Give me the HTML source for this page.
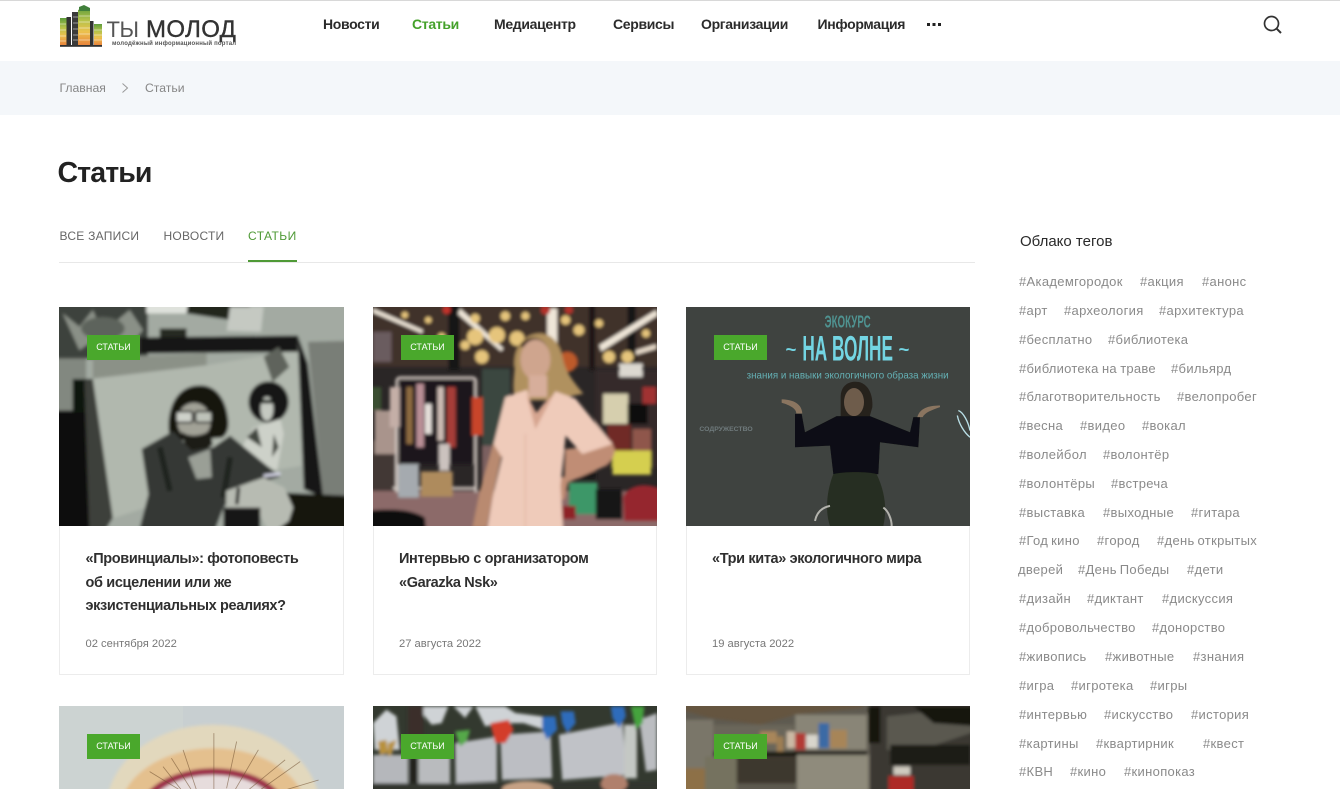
<!DOCTYPE html>
<html lang="ru"><head><meta charset="utf-8"><title>Статьи</title>
<style>
html,body{margin:0;padding:0;background:#fff;width:1340px;height:789px;overflow:hidden}
#p{position:absolute;left:0;top:0;width:1340px;height:789px;overflow:hidden;font-family:"Liberation Sans","Noto Sans CJK SC",sans-serif;color:#222}
.a{position:absolute;white-space:nowrap}
.n{top:16px;font-size:14px;line-height:16px;font-weight:700;color:#2b2b2b;letter-spacing:-.32px}
.t{font-size:13px;line-height:16px;color:#8a8a8a;letter-spacing:.32px;word-spacing:-1px;margin-top:1px}
.card{position:absolute;top:526px;height:149px;box-sizing:border-box;border:1px solid #ececec;border-top:0;background:#fff}
.h{font-size:14.5px;line-height:23.5px;font-weight:700;color:#2f2f2f;letter-spacing:-.36px;margin-top:1px}
.d{font-size:11.2px;line-height:14px;color:#777;margin-top:1px}
.b{position:absolute;width:53px;height:25px;background:#4aa82c;color:#fff;font-size:9px;line-height:25px;text-align:center}
.tab{top:228px;font-size:12px;line-height:16px;letter-spacing:.25px;color:#666}
svg{position:absolute;display:block;overflow:hidden}
</style></head><body><div id="p">
<div class="a" style="left:0;top:0;width:1340px;height:1px;background:#d8d8d8"></div>

<svg style="left:58px;top:4px" width="46" height="44" viewBox="0 0 46 44">
<defs>
<linearGradient id="lg" x1="0" y1="0" x2="0" y2="1"><stop offset="0" stop-color="#5d9c3c"/><stop offset=".35" stop-color="#b5c24a"/><stop offset=".65" stop-color="#ecc14e"/><stop offset="1" stop-color="#e8853c"/></linearGradient>
<filter id="f0"><feGaussianBlur stdDeviation=".35"/></filter>
<filter id="f1" x="-5%" y="-5%" width="110%" height="110%"><feGaussianBlur stdDeviation="5"/></filter>
</defs>
<g filter="url(#f0)">
<rect x="2" y="14" width="6.500" height="27" fill="url(#lg)"/>
<rect x="8.500" y="13" width="4.500" height="28" fill="#333"/>
<rect x="14" y="8" width="6.500" height="33" fill="#3a3a3a"/>
<path d="M20 41V6l6-3 6 3v35z" fill="url(#lg)"/>
<path d="M21 3l5-2 6 3v3h-11z" fill="#3f7f3a"/>
<rect x="32" y="17" width="3.500" height="24" fill="#333"/>
<rect x="36" y="20" width="8" height="21" fill="url(#lg)"/>
<path d="M2 20h6M2 26h6M2 32h6M2 37h6M21 12h11M21 18h11M21 24h11M21 30h11M21 36h11M36 26h8M36 31h8M36 36h8" stroke="#fff" stroke-opacity=".45" stroke-width=".9"/>
<path d="M15 13h5M15 19h5M15 25h5M15 31h5M15 36h5" stroke="#888" stroke-width="1.300"/>
<rect x="2" y="41" width="42" height="1.800" fill="#333"/>
</g></svg>
<div class="a" style="left:106.500px;top:19px;font-size:22px;line-height:22px;color:#555;letter-spacing:-.4px">ТЫ</div>
<div class="a" style="left:146px;top:18px;font-size:24px;line-height:23px;color:#333;letter-spacing:.35px;-webkit-text-stroke:.4px #333">МОЛОД</div>
<div class="a" style="left:112px;top:40px;font-size:6px;line-height:8px;font-weight:700;color:#555;letter-spacing:.2px">молодёжный информационный портал</div>

<div class="a n" style="left:323px">Новости</div>
<div class="a n" style="left:412px;color:#44a12a">Статьи</div>
<div class="a n" style="left:494px">Медиацентр</div>
<div class="a n" style="left:613px">Сервисы</div>
<div class="a n" style="left:701px">Организации</div>
<div class="a n" style="left:817.500px">Информация</div>
<svg style="left:926px;top:22px" width="17" height="5"><rect x="1" y="1" width="3" height="3" fill="#222"/><rect x="6.500" y="1" width="3" height="3" fill="#222"/><rect x="12" y="1" width="3" height="3" fill="#222"/></svg>
<svg style="left:1262px;top:14px" width="21" height="21" viewBox="0 0 21 21" fill="none" stroke="#333"><circle cx="9.500" cy="9.500" r="7" stroke-width="1.700"/><path d="M14.800 14.800l4.200 4.200" stroke-width="2"/></svg>

<div class="a" style="left:0;top:61px;width:1340px;height:54px;background:#f4f7fa"></div>
<div class="a" style="left:59.500px;top:80px;font-size:12.200px;line-height:16px;color:#868686">Главная</div>
<svg style="left:120px;top:82px" width="10" height="12" fill="none" stroke="#999"><path d="M2.500 1.500l5 4.500-5 4.500"/></svg>
<div class="a" style="left:145px;top:80px;font-size:12.200px;line-height:16px;color:#868686">Статьи</div>

<div class="a" style="left:57.500px;top:155px;font-size:28.500px;line-height:36px;font-weight:700;color:#222;letter-spacing:-.9px">Статьи</div>
<div class="a tab" style="left:59.500px">ВСЕ ЗАПИСИ</div>
<div class="a tab" style="left:163.500px">НОВОСТИ</div>
<div class="a tab" style="left:248px;color:#4f9a36;letter-spacing:.42px">СТАТЬИ</div>
<div class="a" style="left:59px;top:262px;width:916px;height:1px;background:#e8e8e8"></div>
<div class="a" style="left:248px;top:260px;width:49px;height:2px;background:#4f9a36"></div>

<!-- image 1 -->
<svg style="left:59px;top:307px" width="285" height="219" viewBox="29 21 851 654" preserveAspectRatio="none">
<g filter="url(#f1)">
<rect x="0" y="0" width="900" height="700" fill="#a3aaa2"/>
<rect x="0" y="0" width="294" height="176" fill="#3e433d"/>
<path d="M40 40l50 40 40-50 30 70-70 50zM180 80l60-50 40 60-50 60z" fill="#8a9087"/>
<ellipse cx="160" cy="85" rx="65" ry="34" fill="#5d645c"/>
<rect x="0" y="175" width="110" height="160" fill="#828880"/>
<rect x="0" y="330" width="135" height="380" fill="#0b0e0b"/>
<rect x="70" y="236" width="62" height="100" fill="#101310"/>
<polygon points="105,240 135,238 190,650 160,700 120,700" fill="#3c413b"/>
<rect x="290" y="0" width="200" height="40" fill="#dfe2dc"/>
<polygon points="415,0 600,0 595,68 410,40" fill="#22251f"/>
<polygon points="540,20 640,20 632,95 530,92" fill="#c5c9c2"/>
<rect x="330" y="85" width="80" height="30" fill="#262924"/>
<polygon points="130,235 470,195 740,150 755,495 600,520 190,652" fill="#b1b8ae"/>
<polygon points="130,170 340,165 470,160 470,195 130,235" fill="#8b9187"/>
<polygon points="270,112 742,106 742,155 270,160" fill="#141713"/>
<polygon points="742,106 772,190 818,590 760,565" fill="#131512"/>
<polygon points="772,125 900,122 900,585 818,590" fill="#797e77"/>
<polygon points="690,575 900,585 900,700 680,700" fill="#121411"/>
<ellipse cx="655" cy="305" rx="60" ry="62" fill="#171916"/>
<ellipse cx="650" cy="325" rx="19" ry="36" fill="#c5c9c1"/>
<rect x="630" y="298" width="42" height="11" fill="#101210"/>
<polygon points="610,380 690,355 700,400 680,510 600,470 575,440" fill="#cdd1c9"/>
<path d="M590 410l30-30 15 60zM670 400l15 40-20 30z" fill="#42463f"/>
<path d="M640 170l45-30 32 60-50 45z" fill="#5f635c"/>
<path d="M450 255c-60 0-92 50-94 118-1 30 10 52 28 47l125-8c15 0 30-22 25-57-6-55-33-100-84-100z" fill="#181511"/>
<ellipse cx="432" cy="362" rx="50" ry="55" fill="#a2a297"/>
<path d="M395 392c15 18 65 18 85-5l8 45-40 32-42-24z" fill="#1d1a16"/>
<rect x="378" y="333" width="50" height="33" rx="6" fill="#cfd2ca" stroke="#141412" stroke-width="6"/>
<rect x="436" y="333" width="50" height="33" rx="6" fill="#bfc3ba" stroke="#141412" stroke-width="6"/>
<polygon points="276,445 370,392 425,450 490,440 540,405 690,528 565,565 520,620 490,700 265,700 296,580" fill="#353935"/>
<polygon points="415,470 480,445 485,530 440,535" fill="#9a9f96"/>
<path d="M330 440l30 130M540 470l-20 120" stroke="#1d201c" stroke-width="16" fill="none"/>
<polygon points="528,570 640,530 702,560 728,620 715,660 660,700 620,625 528,625" fill="#b7bbb2"/>
<path d="M640 525l50-6" stroke="#dde" stroke-width="8"/>
<path d="M565 560l-5 50" stroke="#0c0c0c" stroke-width="10"/>
<rect x="520" y="620" width="110" height="80" fill="#171916"/>
</g></svg>
<div class="b" style="left:87px;top:335px">СТАТЬИ</div>
<div class="card" style="left:59px;width:285px"></div>
<div class="a h" style="left:85.500px;top:547px">«Провинциалы»: фотоповесть<br>об исцелении или же<br>экзистенциальных реалиях?</div>
<div class="a d" style="left:85.500px;top:636px">02 сентября 2022</div>

<!-- image 2 -->
<svg style="left:373px;top:307px" width="284" height="219" viewBox="25 21 848 654" preserveAspectRatio="none">
<rect width="900" height="700" fill="#2a2626"/>
<g filter="url(#f1)">
<rect x="0" y="0" width="900" height="200" fill="#40302c"/>
<rect x="250" y="0" width="34" height="210" fill="#161515"/><rect x="785" y="0" width="24" height="190" fill="#131212"/><rect x="670" y="0" width="18" height="210" fill="#1a1919"/>
<path d="M25 25l150 65-4 10L25 38zM285 25l130 120-8 8L278 42zM545 25h30v110h-30zM700 135l170-105 5 16-168 108z" fill="#efe6d8"/>
<path d="M810 150l60-18v14l-60 18z" fill="#e9dccb"/>
<g fill="#e6c57c">
<circle cx="330" cy="110" r="24"/><circle cx="395" cy="105" r="24"/><circle cx="455" cy="115" r="22"/><circle cx="350" cy="170" r="20"/><circle cx="300" cy="135" r="14"/><circle cx="730" cy="170" r="18"/><circle cx="785" cy="170" r="18"/><circle cx="640" cy="90" r="16"/><circle cx="600" cy="60" r="14"/><circle cx="700" cy="70" r="12"/><circle cx="330" cy="55" r="14"/><circle cx="420" cy="48" r="14"/><circle cx="480" cy="48" r="12"/><circle cx="120" cy="45" r="10"/><circle cx="190" cy="60" r="10"/><circle cx="230" cy="110" r="12"/><circle cx="840" cy="100" r="12"/></g>
<circle cx="605" cy="185" r="30" fill="#bd5a2c"/><circle cx="245" cy="30" r="12" fill="#c4332a"/><circle cx="540" cy="30" r="14" fill="#b4332a"/><circle cx="610" cy="30" r="12" fill="#b4332a"/>
<rect x="25" y="95" width="55" height="90" fill="#6b5c5e"/>
<rect x="0" y="570" width="900" height="130" fill="#8c6a69"/>
<rect x="0" y="420" width="100" height="150" fill="#423836"/>
<rect x="30" y="330" width="70" height="130" fill="#a9948c"/>
<rect x="0" y="260" width="50" height="70" fill="#3a4f33"/>
<rect x="350" y="205" width="85" height="230" fill="#3a4740"/>
<rect x="350" y="435" width="35" height="140" fill="#7b6161"/>
<path d="M105 232h215q12 0 12 12v330M108 232q-12 0-12 12v330M85 562h250" fill="none" stroke="#d5cbc4" stroke-width="8"/>
<rect x="106" y="240" width="220" height="250" fill="#1e191a"/>
<rect x="125" y="260" width="18" height="170" fill="#8e6c42"/><rect x="155" y="250" width="22" height="190" fill="#b98f96"/><rect x="180" y="310" width="20" height="90" fill="#e5dfda"/><rect x="218" y="260" width="18" height="160" fill="#cfbeb6"/><rect x="246" y="260" width="26" height="180" fill="#a63e38"/><rect x="320" y="290" width="32" height="115" fill="#c9452a"/><rect x="75" y="260" width="30" height="120" fill="#c4afa7"/>
<rect x="100" y="490" width="62" height="100" fill="#a5aaaf"/><rect x="168" y="512" width="95" height="75" fill="#ae8b5d"/><rect x="222" y="430" width="32" height="80" fill="#cbc2be"/>
<path d="M0 630c80-8 140-6 180 20l5 50H0z" fill="#0e0e0e"/>
<rect x="690" y="210" width="210" height="290" fill="#35292b"/>
<rect x="712" y="280" width="75" height="90" fill="#d6cfae"/><rect x="785" y="310" width="60" height="60" fill="#111"/><rect x="725" y="372" width="70" height="80" fill="#6f2a26"/><rect x="800" y="385" width="55" height="85" fill="#8f574c"/><rect x="740" y="450" width="115" height="72" fill="#d5cf4f"/>
<rect x="760" y="190" width="70" height="40" fill="#dcd8d0"/><rect x="830" y="260" width="40" height="50" fill="#a03030"/>
<rect x="610" y="545" width="85" height="95" fill="#3d9768"/><rect x="690" y="565" width="80" height="90" fill="#171719"/><path d="M772 590c15-45 85-45 120-20v90H775z" fill="#95272d"/><rect x="590" y="615" width="40" height="40" fill="#8e2028"/>
<rect x="595" y="445" width="95" height="90" fill="#161618"/>
<path d="M448 200c-5-60 30-100 75-100 40 0 62 35 70 80 8 40 40 75 60 100l-100 20H450c-10-35-5-60-2-100z" fill="#b0915f"/>
<path d="M462 140c15-35 70-38 85 5-25-8-55-6-85-5z" fill="#3c2b20"/>
<ellipse cx="510" cy="178" rx="45" ry="60" fill="#cfa58e"/>
<rect x="490" y="225" width="55" height="65" fill="#d7ae9b"/>
<path d="M384 430l30 10-35 160-15 80h-42l22-110z" fill="#b98a70"/>
<path d="M600 445l55-5 80-20 12 25c0 30-20 50-60 65l-80 35-10 50-50 8-20-45 30-25 40-5z" fill="#c08d74"/>
<path d="M420 290l65-22 25 95 60-90 60 22 110 135-90 30-50-55-15 150 10 170H360l22-135 28-120-25-40z" fill="#efcbba"/>
<path d="M482 278l28 108 55-105-30 28-22 28z" fill="#d6a590"/>
<path d="M480 400v300" stroke="#dcb1a1" stroke-width="3"/>
</g></svg>
<div class="b" style="left:401px;top:335px">СТАТЬИ</div>
<div class="card" style="left:373px;width:284px"></div>
<div class="a h" style="left:399px;top:547px">Интервью с организатором<br>«Garazka Nsk»</div>
<div class="a d" style="left:399px;top:636px">27 августа 2022</div>

<!-- image 3 -->
<svg style="left:686px;top:307px" width="284" height="219" viewBox="18 21 852 654" preserveAspectRatio="none">
<rect x="0" y="0" width="900" height="700" fill="#3f4340"/>
<text x="503" y="82" font-size="52" text-anchor="middle" fill="#4f9391" font-family="Liberation Sans" font-weight="700" textLength="138" lengthAdjust="spacingAndGlyphs">ЭКОКУРС</text>
<text x="503" y="181" font-size="104" text-anchor="middle" fill="#73d5e3" font-family="Liberation Sans" font-weight="700" textLength="272" lengthAdjust="spacingAndGlyphs">НА ВОЛНЕ</text>
<text x="333" y="166" font-size="56" text-anchor="middle" fill="#73d5e3" font-family="Liberation Sans" font-weight="700">~</text>
<text x="672" y="166" font-size="56" text-anchor="middle" fill="#73d5e3" font-family="Liberation Sans" font-weight="700">~</text>
<text x="503" y="235" font-size="30" text-anchor="middle" fill="#64b0b4" font-family="Liberation Sans" textLength="606" lengthAdjust="spacingAndGlyphs">знания и навыки экологичного образа жизни</text>
<text x="138" y="391" font-size="18" text-anchor="middle" fill="#6f7a7c" font-family="Liberation Sans" font-weight="700" textLength="160" lengthAdjust="spacingAndGlyphs">СОДРУЖЕСТВО</text>
<g filter="url(#f0)">
<path d="M482 290c0-35 25-50 55-45 30 8 42 40 40 75l-10 35h-85z" fill="#26201c"/>
<ellipse cx="522" cy="305" rx="30" ry="42" fill="#6e5b4c"/>
<path d="M345 340h20l10 55 95-48h100l120 48 10-45h20l-5 90-115-15-5 95H460l-10-85-105 5z" fill="#0c0f12"/>
<path d="M305 297c25 0 60 8 62 42h-18c0-15-20-25-44-32zM780 315c-25 0-60 4-68 35h16c8-15 25-20 52-30z" fill="#8a7460"/>
<path d="M460 520c30-8 105-8 130 0 28 60 30 110 20 155H450c-14-40-12-100 10-155z" fill="#282e20"/>
<path d="M405 660c5-25 20-40 45-45M610 620c15 10 25 35 25 55" stroke="#b3b3ad" stroke-width="6" fill="none"/>
<path d="M835 330c15 5 30 35 35 60M832 345c5 25 20 50 38 65" stroke="#b9dfe6" stroke-width="4" fill="none"/>
</g></svg>
<div class="b" style="left:714px;top:335px">СТАТЬИ</div>
<div class="card" style="left:686px;width:284px"></div>
<div class="a h" style="left:712px;top:547px">«Три кита» экологичного мира</div>
<div class="a d" style="left:712px;top:636px">19 августа 2022</div>

<!-- row 2 -->
<svg style="left:59px;top:706px" width="285" height="83" viewBox="29 19 852 248" preserveAspectRatio="none">
<rect x="0" y="0" width="900" height="300" fill="#c8cfd1"/>
<rect x="0" y="0" width="400" height="300" fill="#ccd3d2"/>
<g filter="url(#f1)">
<ellipse cx="490" cy="330" rx="320" ry="255" fill="#e2d8bd"/>
<ellipse cx="490" cy="340" rx="280" ry="195" fill="#e4c08e"/>
<ellipse cx="490" cy="345" rx="225" ry="140" fill="#9c2d4a"/>
<ellipse cx="490" cy="350" rx="205" ry="125" fill="#e6dcdc"/>
</g>
<g stroke="#6b4a2c" stroke-width="2.500" fill="none" opacity=".55">
<path d="M492 100v170M400 150l40 120M365 175l60 95M300 215l90 55M560 125l-30 140M625 150l-70 120M705 180l-110 90M750 185l-120 85M805 240l-100 30M340 200l55 70"/>
</g></svg>
<svg style="left:373px;top:706px" width="284" height="83" viewBox="25 19 848 248" preserveAspectRatio="none">
<rect x="0" y="0" width="900" height="300" fill="#33392f"/>
<g filter="url(#f1)">
<path d="M25 70l40-40 30 20 10 100H30zM175 20h75l-20 50-30 5-25-30zM265 20h60l-25 35zM330 20h90l30 20 80 10 5 40-60-20-65 0-50 10z" fill="#cfd3d6"/>
<rect x="130" y="20" width="45" height="110" fill="#3a2f2a"/>
<rect x="25" y="165" width="105" height="90" fill="#b5b7bb"/>
<rect x="160" y="165" width="95" height="90" fill="#b9bbbe"/>
<polygon points="270,130 395,110 395,245 272,250" fill="#bdbfc4"/>
<polygon points="405,105 555,95 560,235 410,240" fill="#bcbec3"/>
<polygon points="580,105 770,68 782,225 590,240" fill="#c0c2c7"/>
<polygon points="820,60 873,40 873,210 840,215" fill="#bbbdc1"/>
<rect x="775" y="75" width="38" height="160" fill="#c4c8c4"/>
<rect x="135" y="175" width="22" height="85" fill="#22231f"/>
<rect x="0" y="250" width="900" height="30" fill="#32362e"/>
<path d="M375 70l55-10 15 30-25 40h-30z" fill="#d33e2c"/>
<path d="M530 50l40 0 5 40-30 30-15-30zM585 35l40 0 5 35-25 30-15-30zM735 20h40l5 30-20 35-20-30z" fill="#2e6cbb"/>
<path d="M795 20h40l-5 50-20 20z" fill="#45a33d"/>
<path d="M270 95l45-5-10 35-20 15z" fill="#55a84a"/>
<path d="M40 125l25-5 5 40-25 5zM70 130l25-10-15 45-10 5z" fill="#b8913e"/>
<ellipse cx="485" cy="268" rx="75" ry="25" fill="#c6a184"/>
<ellipse cx="745" cy="250" rx="40" ry="28" fill="#b0806c"/>
</g></svg>
<svg style="left:686px;top:706px" width="284" height="83" viewBox="18 19 851 248" preserveAspectRatio="none">
<rect x="0" y="0" width="900" height="300" fill="#5e5a50"/>
<g filter="url(#f1)">
<polygon points="0,0 570,0 540,25 345,45 240,75 90,55 0,30" fill="#655440"/>
<rect x="0" y="60" width="100" height="150" fill="#7a7669"/>
<rect x="100" y="75" width="240" height="80" fill="#6a665a"/>
<rect x="345" y="45" width="215" height="105" fill="#898577"/>
<rect x="240" y="95" width="50" height="35" fill="#a8865a"/><rect x="290" y="110" width="20" height="50" fill="#9e7e52"/>
<rect x="320" y="95" width="25" height="50" fill="#cbb9a4"/><rect x="345" y="100" width="32" height="50" fill="#b33a34"/><rect x="378" y="105" width="35" height="40" fill="#d8d5cc"/><rect x="415" y="70" width="32" height="75" fill="#3b6aa5"/><rect x="450" y="90" width="50" height="55" fill="#a78559"/>
<rect x="100" y="155" width="460" height="14" fill="#16140f"/>
<rect x="0" y="205" width="75" height="80" fill="#8d6f46"/>
<rect x="75" y="170" width="95" height="110" fill="#75725f"/>
<rect x="170" y="170" width="180" height="80" fill="#3d392f"/>
<rect x="350" y="165" width="215" height="110" fill="#8f8b7c"/>
<polygon points="570,0 900,0 900,300 570,300" fill="#3a3833"/>
<polygon points="620,50 900,20 900,90 720,150 620,150" fill="#5a5850"/>
<polygon points="700,20 900,20 900,80 760,70" fill="#161511"/>
<rect x="630" y="135" width="240" height="60" fill="#1d1c18"/>
<rect x="625" y="228" width="75" height="50" fill="#ad2a26"/>
<rect x="640" y="200" width="50" height="25" fill="#cfcac0"/>
<rect x="565" y="20" width="35" height="110" fill="#17150f"/>
</g></svg>
<div class="b" style="left:87px;top:734px">СТАТЬИ</div>
<div class="b" style="left:401px;top:734px">СТАТЬИ</div>
<div class="b" style="left:714px;top:734px">СТАТЬИ</div>

<!-- sidebar -->
<div class="a" style="left:1020px;top:233px;font-size:15px;line-height:18px;color:#2a2a2a">Облако тегов</div>
<div class="a t" style="left:1019px;top:273px">#Академгородок</div><div class="a t" style="left:1140px;top:273px">#акция</div><div class="a t" style="left:1202px;top:273px">#анонс</div>
<div class="a t" style="left:1019px;top:302px">#арт</div><div class="a t" style="left:1064px;top:302px">#археология</div><div class="a t" style="left:1159px;top:302px">#архитектура</div>
<div class="a t" style="left:1019px;top:331px">#бесплатно</div><div class="a t" style="left:1108px;top:331px">#библиотека</div>
<div class="a t" style="left:1019px;top:360px;letter-spacing:.25px;word-spacing:-.5px">#библиотека на траве</div><div class="a t" style="left:1171px;top:360px">#бильярд</div>
<div class="a t" style="left:1019px;top:388px">#благотворительность</div><div class="a t" style="left:1177px;top:388px">#велопробег</div>
<div class="a t" style="left:1019px;top:417px">#весна</div><div class="a t" style="left:1080px;top:417px">#видео</div><div class="a t" style="left:1142px;top:417px">#вокал</div>
<div class="a t" style="left:1019px;top:446px">#волейбол</div><div class="a t" style="left:1103px;top:446px">#волонтёр</div>
<div class="a t" style="left:1019px;top:475px">#волонтёры</div><div class="a t" style="left:1111px;top:475px">#встреча</div>
<div class="a t" style="left:1019px;top:504px">#выставка</div><div class="a t" style="left:1103px;top:504px">#выходные</div><div class="a t" style="left:1191px;top:504px">#гитара</div>
<div class="a t" style="left:1019px;top:532px">#Год кино</div><div class="a t" style="left:1097px;top:532px">#город</div><div class="a t" style="left:1157px;top:532px">#день открытых</div>
<div class="a t" style="left:1018px;top:561px">дверей</div><div class="a t" style="left:1078px;top:561px">#День Победы</div><div class="a t" style="left:1187px;top:561px">#дети</div>
<div class="a t" style="left:1019px;top:590px">#дизайн</div><div class="a t" style="left:1087px;top:590px">#диктант</div><div class="a t" style="left:1162px;top:590px">#дискуссия</div>
<div class="a t" style="left:1019px;top:619px">#добровольчество</div><div class="a t" style="left:1152px;top:619px">#донорство</div>
<div class="a t" style="left:1019px;top:648px">#живопись</div><div class="a t" style="left:1105px;top:648px">#животные</div><div class="a t" style="left:1193px;top:648px">#знания</div>
<div class="a t" style="left:1019px;top:677px">#игра</div><div class="a t" style="left:1071px;top:677px">#игротека</div><div class="a t" style="left:1150px;top:677px">#игры</div>
<div class="a t" style="left:1019px;top:706px">#интервью</div><div class="a t" style="left:1104px;top:706px">#искусство</div><div class="a t" style="left:1191px;top:706px">#история</div>
<div class="a t" style="left:1019px;top:735px">#картины</div><div class="a t" style="left:1096px;top:735px">#квартирник</div><div class="a t" style="left:1203px;top:735px">#квест</div>
<div class="a t" style="left:1019px;top:763px">#КВН</div><div class="a t" style="left:1070px;top:763px">#кино</div><div class="a t" style="left:1124px;top:763px">#кинопоказ</div>
</div></body></html>
